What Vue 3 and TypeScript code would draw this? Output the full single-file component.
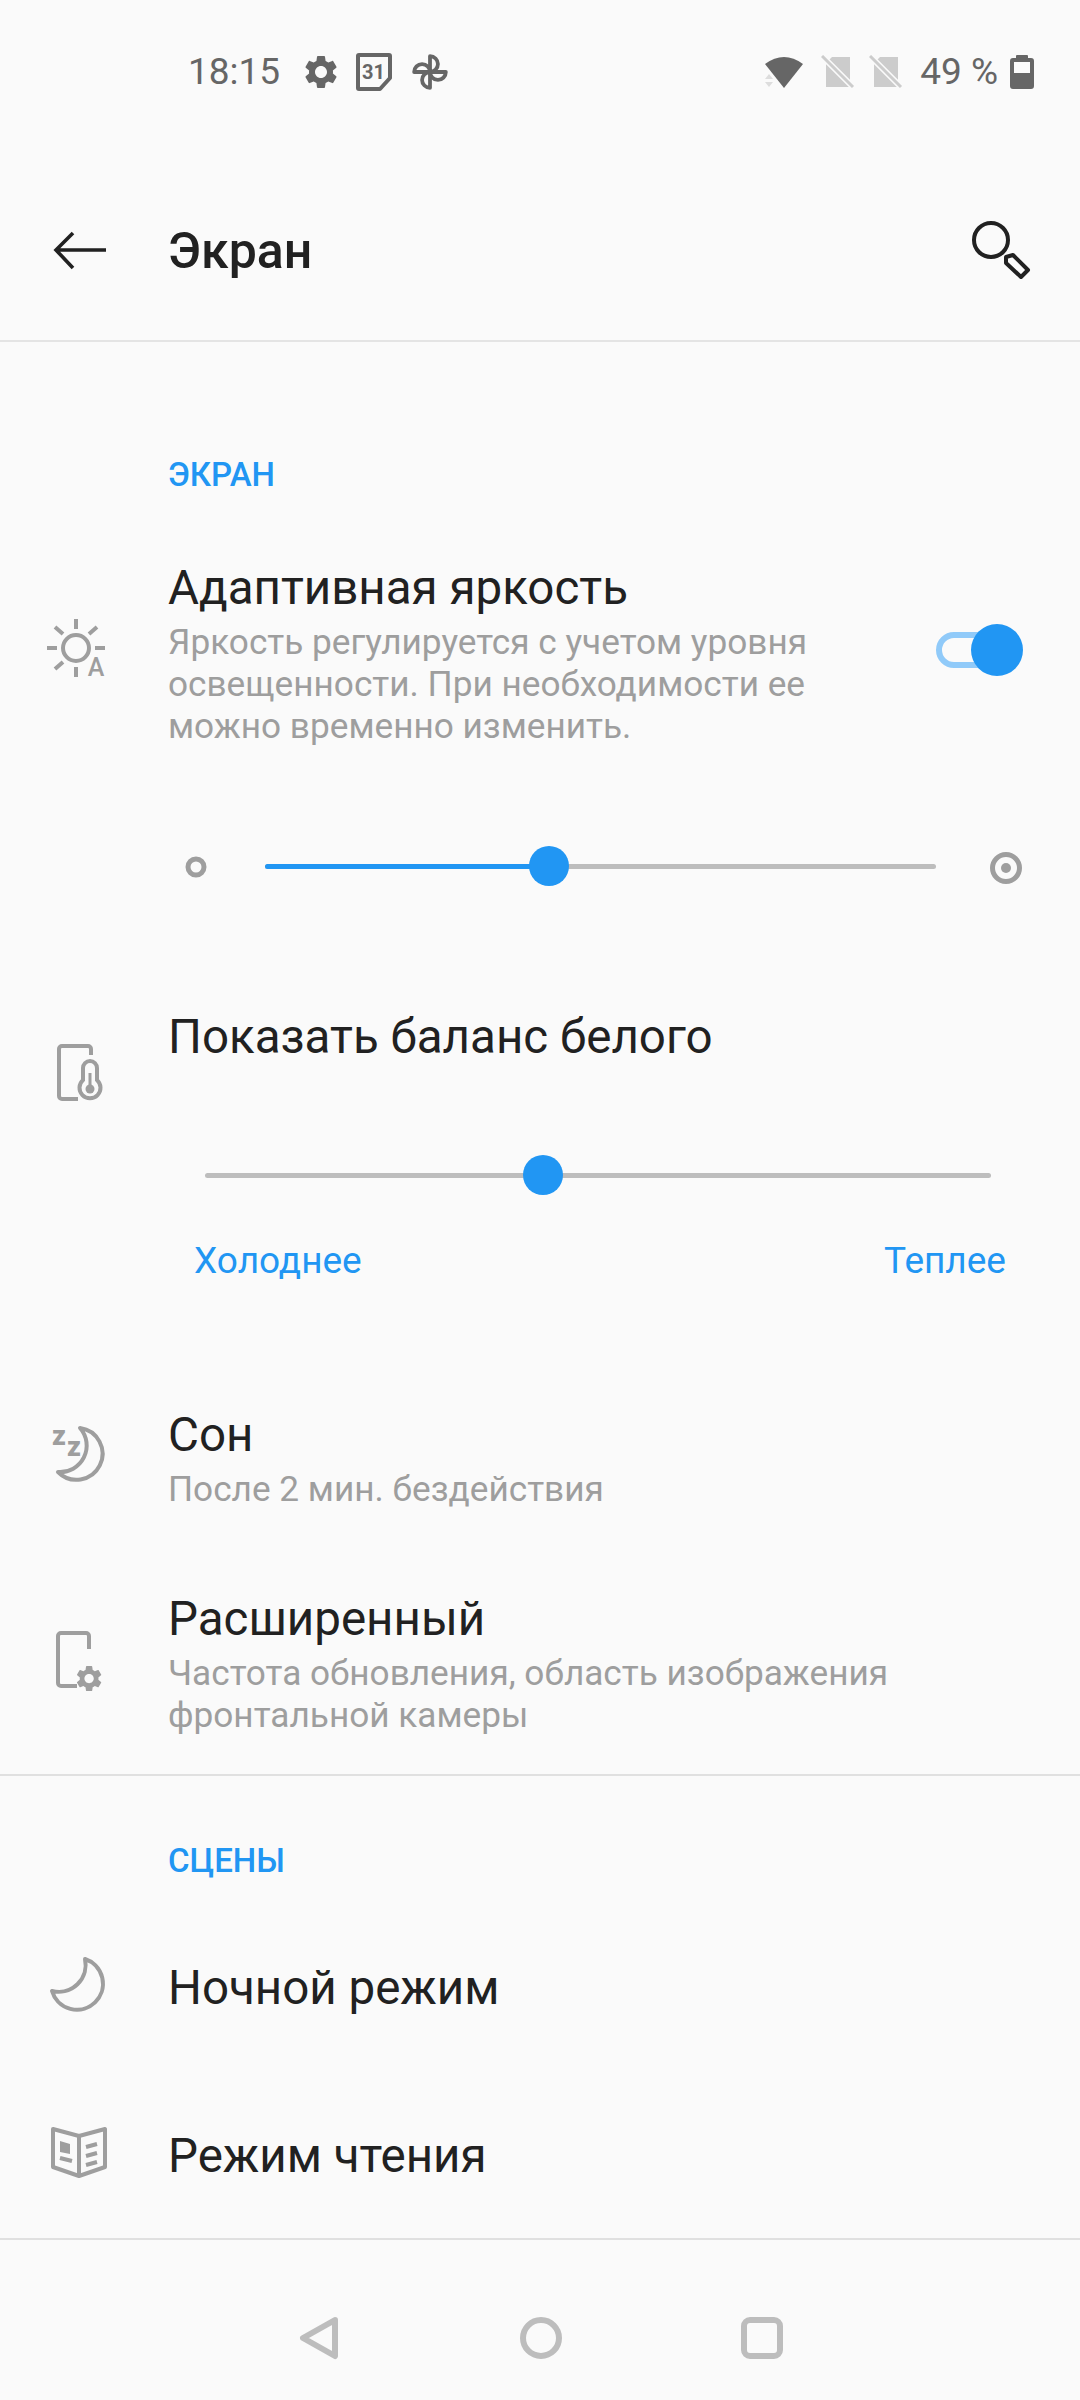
<script setup lang="ts">
const brightness = 42.3
const balance = 43

const gear = 'M19.14 12.94c.04-.3.06-.61.06-.94 0-.32-.02-.64-.07-.94l2.03-1.58c.18-.14.23-.41.12-.61l-1.92-3.32c-.12-.22-.37-.29-.59-.22l-2.39.96c-.5-.38-1.03-.7-1.62-.94l-.36-2.54c-.04-.24-.24-.41-.48-.41h-3.84c-.24 0-.43.17-.47.41l-.36 2.54c-.59.24-1.13.57-1.62.94l-2.39-.96c-.22-.08-.47 0-.59.22L2.74 8.87c-.12.21-.08.47.12.61l2.03 1.58c-.05.3-.09.63-.09.94s.02.64.07.94l-2.03 1.58c-.18.14-.23.41-.12.61l1.92 3.32c.12.22.37.29.59.22l2.39-.96c.5.38 1.03.7 1.62.94l.36 2.54c.05.24.24.41.48.41h3.84c.24 0 .44-.17.47-.41l.36-2.54c.59-.24 1.13-.56 1.62-.94l2.39.96c.22.08.47 0 .59-.22l1.92-3.32c.12-.22.07-.47-.12-.61l-2.01-1.58zM12 15.6c-1.98 0-3.6-1.62-3.6-3.6s1.62-3.6 3.6-3.6 3.6 1.62 3.6 3.6-1.62 3.6-3.6 3.6z'
</script>

<template>
  <div class="screen">
    <div class="status">
      <span class="status-text time">18:15</span>
      <svg class="st-gear" width="40" height="40" viewBox="0 0 24 24"><path :d="gear" fill="#666" /></svg>
      <svg class="st-cal" width="38" height="38" viewBox="0 0 38 38">
        <path d="M4 2h30a1 1 0 0 1 1 1v22l-10 11H4a1 1 0 0 1-1-1V3a1 1 0 0 1 1-1z" fill="none" stroke="#666" stroke-width="4" stroke-linejoin="round" />
        <text x="18.5" y="26" text-anchor="middle" class="cal-num">31</text>
      </svg>
      <svg class="st-pin" width="38" height="38" viewBox="0 0 36 36">
        <g fill="none" stroke="#666" stroke-width="3.6" stroke-linejoin="round">
          <path d="M18 18V3a7.5 7.5 0 0 1 0 15z" />
          <path d="M18 18h15a7.5 7.5 0 0 1-15 0z" />
          <path d="M18 18v15a7.5 7.5 0 0 1 0-15z" />
          <path d="M18 18H3a7.5 7.5 0 0 1 15 0z" />
        </g>
      </svg>
      <div class="spacer"></div>
      <svg class="st-wifi" width="40" height="34" viewBox="0 0 40 34">
        <path d="M20 33L1 9Q20-5 39 9z" fill="#666" />
        <path d="M1 24l4-5 4 5zM1 27h8l-4 5z" fill="#ddd" />
      </svg>
      <svg class="st-sim" width="34" height="34" viewBox="0 0 34 34">
        <path d="M11 2h18v30H5V8z" fill="#ccc" />
        <path d="M1 1l31 31" stroke="#fafafa" stroke-width="6" />
        <path d="M1 1l31 31" stroke="#ccc" stroke-width="3" />
      </svg>
      <svg class="st-sim2" width="34" height="34" viewBox="0 0 34 34">
        <path d="M11 2h18v30H5V8z" fill="#ccc" />
        <path d="M1 1l31 31" stroke="#fafafa" stroke-width="6" />
        <path d="M1 1l31 31" stroke="#ccc" stroke-width="3" />
      </svg>
      <span class="status-text pct">49 %</span>
      <svg class="st-batt" width="24" height="35" viewBox="0 0 24 35">
        <path d="M6 4V2a1 1 0 0 1 1-1h10a1 1 0 0 1 1 1v2h3a3 3 0 0 1 3 3v25a3 3 0 0 1-3 3H3a3 3 0 0 1-3-3V7a3 3 0 0 1 3-3z" fill="#666" />
        <rect x="4" y="8" width="16" height="11" fill="#fafafa" />
      </svg>
    </div>

    <header class="toolbar">
      <svg class="back" width="54" height="40" viewBox="0 0 54 40">
        <path d="M53 19H3M20 2L3 19l17 18" fill="none" stroke="#212121" stroke-width="3.6" />
      </svg>
      <h1 class="page-title">Экран</h1>
      <svg class="search" width="70" height="70" viewBox="0 0 70 70">
        <circle cx="26" cy="25" r="17" fill="none" stroke="#212121" stroke-width="4" />
        <path d="M41 42l7-2 15 15-7 7-15-14z" fill="none" stroke="#212121" stroke-width="4" stroke-linejoin="round" />
      </svg>
    </header>

    <div class="section-label first-label">ЭКРАН</div>

    <div class="row row-adaptive">
      <svg class="icon icon-sun" width="62" height="70" viewBox="0 0 62 70">
        <circle cx="30" cy="30" r="13" fill="none" stroke="#9e9e9e" stroke-width="4" />
        <path d="M30 1v10M30 49v10M1 30h10M49 30h10M9 9l8 7M51 9l-8 7M9 51l8-7" stroke="#9e9e9e" stroke-width="4" fill="none" />
        <text x="50" y="58" text-anchor="middle" class="icon-a">A</text>
      </svg>
      <div class="row-body">
        <div class="row-title">Адаптивная яркость</div>
        <div class="row-sub">Яркость регулируется с учетом уровня<br />освещенности. При необходимости ее<br />можно временно изменить.</div>
      </div>
      <div class="switch">
        <span class="switch-track"></span>
        <span class="switch-thumb"></span>
      </div>
    </div>

    <div class="bright-slider">
      <svg width="40" height="40" viewBox="0 0 40 40"><circle cx="21" cy="21" r="8" fill="none" stroke="#9e9e9e" stroke-width="5" /></svg>
      <div class="track">
        <div class="track-fill" :style="{ width: brightness + '%' }"></div>
        <div class="thumb" :style="{ left: brightness + '%' }"></div>
      </div>
      <svg width="40" height="40" viewBox="0 0 40 40">
        <circle cx="20" cy="22" r="13.5" fill="none" stroke="#9e9e9e" stroke-width="5" />
        <circle cx="20" cy="22" r="5" fill="#9e9e9e" />
      </svg>
    </div>

    <div class="row row-balance">
      <svg class="icon icon-temp" width="60" height="70" viewBox="0 0 60 70">
        <path d="M41 15v-6a3 3 0 0 0-3-3H12a3 3 0 0 0-3 3v47a3 3 0 0 0 3 3h16" fill="none" stroke="#9e9e9e" stroke-width="4" />
        <path d="M33 40V28a7 7 0 0 1 14 0v12a10.500 10.500 0 1 1-14 0z" fill="none" stroke="#9e9e9e" stroke-width="4" />
        <path d="M40 33v16" stroke="#9e9e9e" stroke-width="3" />
        <circle cx="40" cy="49" r="4.500" fill="#9e9e9e" />
      </svg>
      <div class="row-body">
        <div class="row-title">Показать баланс белого</div>
      </div>
    </div>

    <div class="balance-slider">
      <div class="track">
        <div class="thumb" :style="{ left: balance + '%' }"></div>
      </div>
    </div>
    <div class="balance-labels">
      <span>Холоднее</span>
      <span>Теплее</span>
    </div>

    <div class="row row-sleep">
      <svg class="icon icon-sleep" width="60" height="70" viewBox="0 0 60 70">
        <text x="2" y="25" class="icon-z">z</text>
        <text x="17" y="36" class="icon-z">z</text>
        <path d="M30 8A26 26 0 1 1 8 52A26.500 26.500 0 0 0 30 8z" fill="none" stroke="#9e9e9e" stroke-width="4" stroke-linejoin="round" />
      </svg>
      <div class="row-body">
        <div class="row-title">Сон</div>
        <div class="row-sub">После 2 мин. бездействия</div>
      </div>
    </div>

    <div class="row row-advanced">
      <svg class="icon icon-adv" width="60" height="72" viewBox="0 0 60 72">
        <path d="M41 24V11a3 3 0 0 0-3-3H13a3 3 0 0 0-3 3v47a3 3 0 0 0 3 3h16" fill="none" stroke="#9e9e9e" stroke-width="4" />
        <path :d="gear" fill="#9e9e9e" transform="translate(25.500 38) scale(1.300)" />
      </svg>
      <div class="row-body">
        <div class="row-title">Расширенный</div>
        <div class="row-sub">Частота обновления, область изображения<br />фронтальной камеры</div>
      </div>
    </div>

    <div class="divider advanced-divider"></div>

    <div class="section-label scenes-label">СЦЕНЫ</div>

    <div class="row row-night">
      <svg class="icon icon-night" width="64" height="64" viewBox="0 0 64 64">
        <path d="M39 7A26 26 0 1 1 6 39A27 27 0 0 0 39 7z" fill="none" stroke="#9e9e9e" stroke-width="4" stroke-linejoin="round" />
      </svg>
      <div class="row-body">
        <div class="row-title">Ночной режим</div>
      </div>
    </div>

    <div class="row row-read">
      <svg class="icon icon-book" width="64" height="64" viewBox="0 0 64 64">
        <path d="M7 7l26 7 26-7v38l-26 9-26-9z" fill="none" stroke="#9e9e9e" stroke-width="4" stroke-linejoin="round" />
        <path d="M33 14v40" stroke="#9e9e9e" stroke-width="4" />
        <path d="M14 19l10 3v10l-10-2z" fill="#9e9e9e" />
        <path d="M14 36l12 3M40 25l11-3M40 34l11-3M40 43l11-3" stroke="#9e9e9e" stroke-width="4" fill="none" />
      </svg>
      <div class="row-body">
        <div class="row-title">Режим чтения</div>
      </div>
    </div>

    <div class="divider read-divider"></div>

    <nav class="navbar">
      <svg width="42" height="44" viewBox="0 0 42 44">
        <path d="M36 4L4 22l32 18z" fill="none" stroke="#bdbdbd" stroke-width="6" stroke-linejoin="round" />
      </svg>
      <svg width="42" height="44" viewBox="0 0 42 44">
        <circle cx="21" cy="22" r="18" fill="none" stroke="#bdbdbd" stroke-width="6" />
      </svg>
      <svg width="42" height="44" viewBox="0 0 42 44">
        <rect x="3" y="4" width="36" height="36" rx="6" fill="none" stroke="#bdbdbd" stroke-width="6" />
      </svg>
    </nav>
  </div>
</template>

<style scoped>
.screen {
  width: 1080px;
  height: 2400px;
  overflow: hidden;
  background: #fafafa;
  font-family: Roboto, "Noto Sans", sans-serif;
  color: #212121;
}

.status {
  height: 143px;
  display: flex;
  align-items: center;
  padding: 0 46px 0 188px;
  box-sizing: border-box;
}
.status-text {
  font-size: 37px;
  color: #666;
  white-space: nowrap;
}
.st-gear { margin-left: 21px; }
.st-cal { margin-left: 14px; }
.st-pin { margin-left: 18px; }
.st-sim { margin-left: 17px; }
.st-sim2 { margin-left: 14px; }
.pct { margin-left: 17px; }
.st-batt { margin-left: 12px; }
.spacer { flex: 1; }
.cal-num {
  font-size: 20px;
  font-weight: 700;
  fill: #666;
  font-family: Roboto, sans-serif;
}

.toolbar {
  height: 197px;
  display: flex;
  align-items: flex-start;
  border-bottom: 2px solid #e4e4e4;
}
.back { margin: 88px 0 0 53px; flex: none; }
.page-title {
  margin: 78px 0 0 61px;
  font-size: 50px;
  line-height: 60px;
  font-weight: 500;
  color: #212121;
}
.search { margin: 72px 45px 0 auto; }

.section-label {
  height: 60px;
  line-height: 60px;
  padding-left: 168px;
  font-size: 33px;
  font-weight: 500;
  color: #2196f3;
}
.first-label { margin-top: 103px; }
.scenes-label { margin-top: 55px; }

.row {
  display: flex;
  align-items: flex-start;
}
.icon { flex: none; }
.row-body { flex: none; margin-left: 58px; }
.row-title {
  font-size: 47.500px;
  line-height: 56px;
  color: #212121;
  white-space: nowrap;
}
.row-sub {
  margin-top: 5px;
  font-size: 35.200px;
  line-height: 42px;
  color: #9e9e9e;
  white-space: nowrap;
}

.row-adaptive { margin-top: 55px; }
.icon-sun { margin: 58px 0 0 46px; }
.icon-sun + .row-body { margin-left: 60px; }
.icon-a {
  font-size: 25px;
  font-weight: 500;
  fill: #9e9e9e;
  font-family: Roboto, sans-serif;
}

.switch {
  position: relative;
  width: 87px;
  height: 52px;
  margin: 64px 57px 0 auto;
}
.switch-track {
  position: absolute;
  left: 0;
  top: 8px;
  width: 71px;
  height: 36px;
  border: 6px solid #90caf9;
  border-radius: 18px;
  box-sizing: border-box;
}
.switch-thumb {
  position: absolute;
  right: 0;
  top: 0;
  width: 52px;
  height: 52px;
  border-radius: 50%;
  background: #2196f3;
}

.bright-slider {
  display: flex;
  align-items: center;
  gap: 50px;
  margin-top: 99px;
  padding: 0 54px 0 175px;
  height: 40px;
}
.track {
  position: relative;
  flex: 1;
  height: 5px;
  background: #bdbdbd;
  border-radius: 3px;
}
.track-fill {
  height: 100%;
  background: #2196f3;
  border-radius: 3px;
}
.thumb {
  position: absolute;
  top: 50%;
  width: 40px;
  height: 40px;
  border-radius: 50%;
  background: #2196f3;
  transform: translate(-50%, -50%);
}

.row-balance { margin-top: 123px; height: 56px; }
.icon-temp { margin: 31px 0 0 50px; }

.balance-slider {
  display: flex;
  align-items: center;
  height: 40px;
  margin-top: 90px;
  padding: 0 89px 0 205px;
}
.balance-labels {
  display: flex;
  justify-content: space-between;
  margin-top: 44px;
  padding: 0 74px 0 194px;
  font-size: 37px;
  line-height: 44px;
  color: #2196f3;
}

.row-sleep { margin-top: 124px; }
.icon-sleep { margin: 13px 0 0 50px; }
.icon-z {
  font-size: 27px;
  font-weight: 900;
  fill: #9e9e9e;
  font-family: Roboto, sans-serif;
}

.row-advanced { margin-top: 81px; }
.icon-adv { margin: 34px 0 0 48px; }
.icon-adv + .row-body { margin-left: 60px; }

.divider {
  height: 2px;
  background: #e0e0e0;
}
.advanced-divider { margin-top: 38px; }
.read-divider { margin-top: 54px; }

.row-night { margin-top: 69px; height: 56px; }
.icon-night { margin: -8px 0 0 46px; }
.row-read { margin-top: 112px; height: 56px; }
.icon-book { margin: -6px 0 0 46px; }

.navbar {
  display: flex;
  gap: 179px;
  padding: 76px 0 0 299px;
}
</style>

<style>
html, body { background: #fafafa; }
</style>
